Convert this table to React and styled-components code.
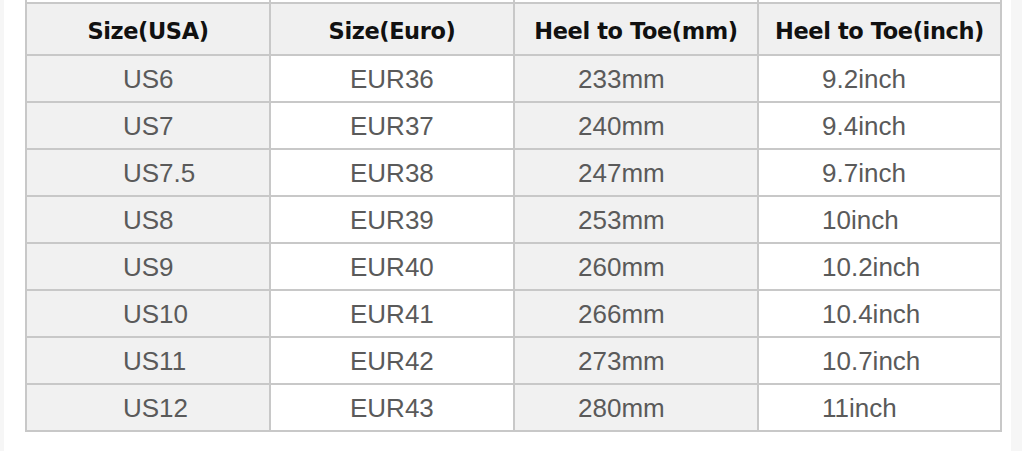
import React from "react";
import styled, { createGlobalStyle } from "styled-components";

const Global = createGlobalStyle`
  html, body { margin: 0; padding: 0; background: #ffffff; }
  body { width: 1022px; height: 451px; overflow: hidden; }
`;

const Page = styled.div`
  display: flex;
  width: 1022px;
  height: 451px;
  background: #ffffff;
`;

const Strip = styled.div`
  flex: 0 0 ${(p) => p.$w}px;
  background: #f6f6f6;
`;

const Main = styled.div`
  flex: 1;
  padding: 0 8px 0 21px;
`;

const Table = styled.table`
  border-collapse: collapse;
  table-layout: fixed;
  width: 975px;
  font-family: "Liberation Sans", Arial, sans-serif;
`;

const CutRow = styled.tr`
  height: 3px;
  td {
    padding: 0;
    border-left: 2px solid #c8c8c8;
    border-right: 2px solid #c8c8c8;
    background: #ffffff;
  }
`;

const HeadCell = styled.th`
  height: 47px;
  padding: 3px 0 0 0;
  border: 2px solid #c8c8c8;
  background: #f0f0f0;
  color: #111111;
  font-family: "DejaVu Sans", Verdana, sans-serif;
  font-weight: bold;
  font-size: 22.5px;
  letter-spacing: -0.4px;
  text-align: center;
  vertical-align: middle;
`;

const Cell = styled.td`
  height: 45px;
  padding: 0 0 0 ${(p) => p.$indent}px;
  border: 2px solid #c8c8c8;
  background: ${(p) => (p.$shade ? "#f1f1f1" : "#ffffff")};
  color: #5a5a5a;
  font-size: 26px;
  text-align: left;
  vertical-align: middle;
  line-height: 1;
  white-space: nowrap;
`;

const indents = [96, 79, 63, 63];

const headers = ["Size(USA)", "Size(Euro)", "Heel to Toe(mm)", "Heel to Toe(inch)"];

const rows = [
  ["US6", "EUR36", "233mm", "9.2inch"],
  ["US7", "EUR37", "240mm", "9.4inch"],
  ["US7.5", "EUR38", "247mm", "9.7inch"],
  ["US8", "EUR39", "253mm", "10inch"],
  ["US9", "EUR40", "260mm", "10.2inch"],
  ["US10", "EUR41", "266mm", "10.4inch"],
  ["US11", "EUR42", "273mm", "10.7inch"],
  ["US12", "EUR43", "280mm", "11inch"],
];

export default function App() {
  return (
    <>
      <Global />
      <Page>
        <Strip $w={4} />
        <Main>
          <Table>
            <colgroup>
              <col style={{ width: "244px" }} />
              <col style={{ width: "244px" }} />
              <col style={{ width: "244px" }} />
              <col style={{ width: "243px" }} />
            </colgroup>
            <tbody>
              <CutRow>
                <td />
                <td />
                <td />
                <td />
              </CutRow>
              <tr>
                {headers.map((h) => (
                  <HeadCell key={h}>{h}</HeadCell>
                ))}
              </tr>
              {rows.map((r) => (
                <tr key={r[0]}>
                  {r.map((v, i) => (
                    <Cell key={i} $shade={i % 2 === 0} $indent={indents[i]}>
                      {v}
                    </Cell>
                  ))}
                </tr>
              ))}
            </tbody>
          </Table>
        </Main>
        <Strip $w={11} />
      </Page>
    </>
  );
}
